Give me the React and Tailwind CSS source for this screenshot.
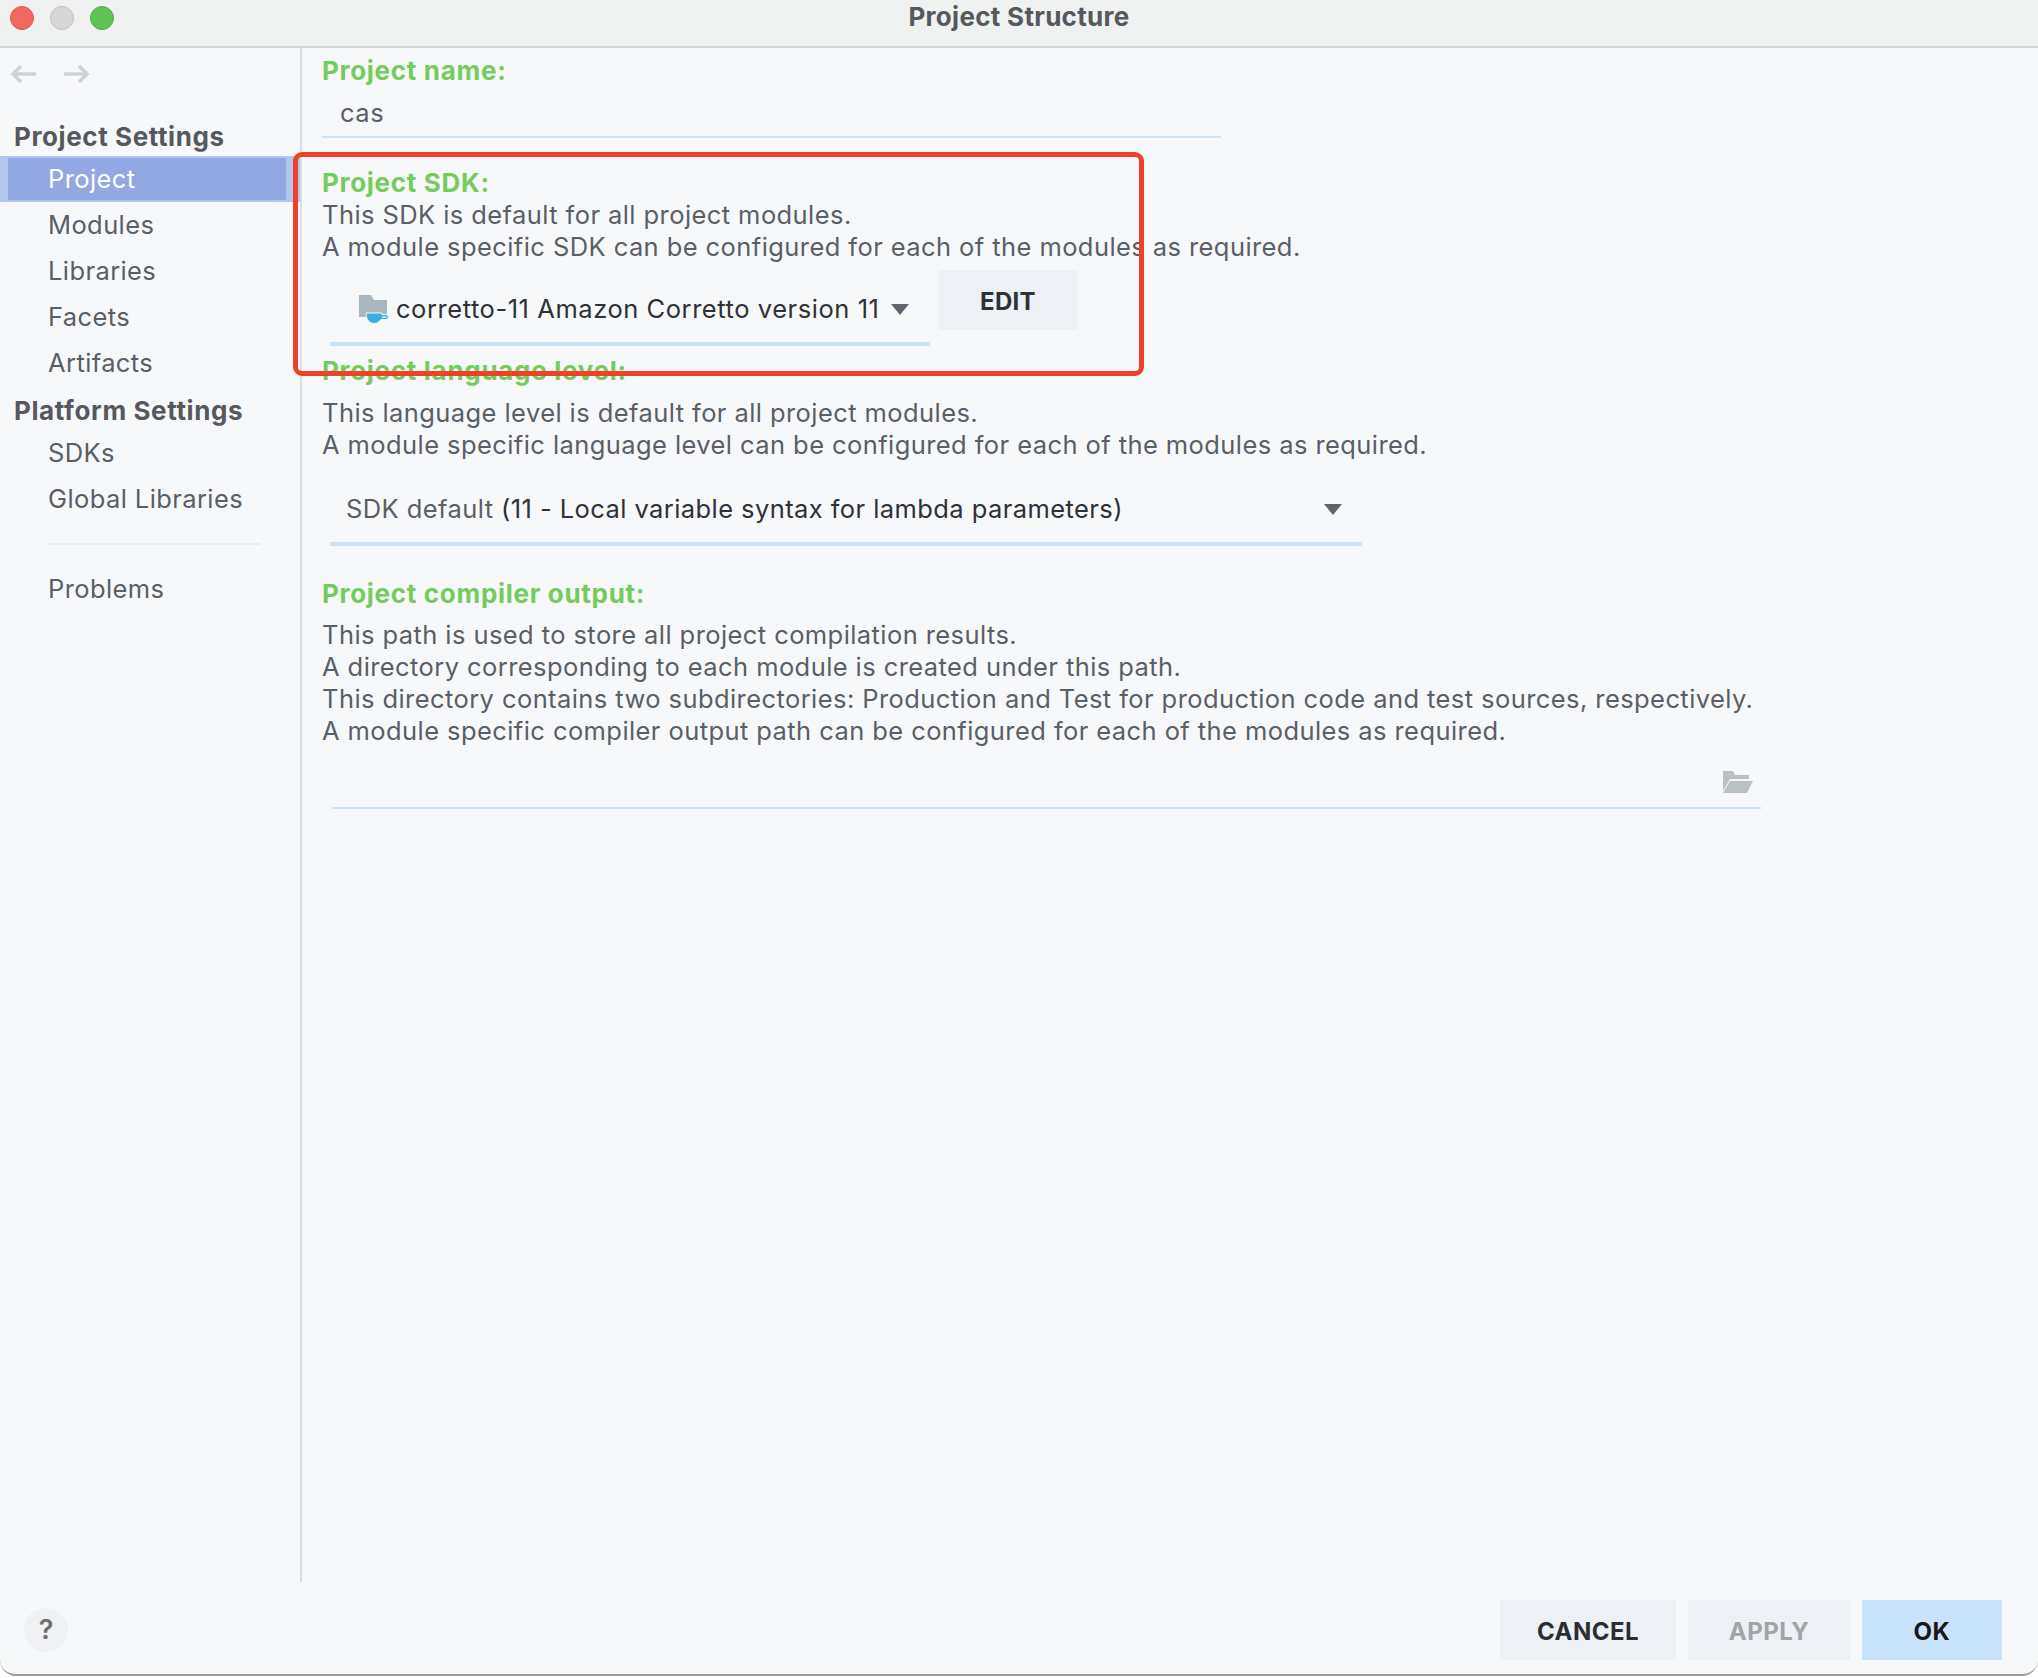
import React from "react";

const font = { fontFamily: "Inter, 'Noto Sans', sans-serif" };

function Side({ children, className = "" }) {
  return (
    <div className={`h-[46px] flex items-center text-[25.5px] tracking-[0.4px] pl-[48px] text-[#5a5f66] ${className}`}>
      {children}
    </div>
  );
}

function Heading({ children, className = "" }) {
  return <div className={`h-[32px] leading-[32px] text-[26px] tracking-[0.7px] font-bold text-[#74cc5c] ${className}`}>{children}</div>;
}

function Para({ lines }) {
  return (
    <div className="text-[25.5px] leading-[32px] text-[#5a5f66] tracking-[0.42px]">
      {lines.map((l) => (
        <div key={l} className="whitespace-nowrap">{l}</div>
      ))}
    </div>
  );
}

function Caret({ className = "" }) {
  return (
    <svg width="18" height="11" viewBox="0 0 18 11" className={className}>
      <path d="M0 0H18L9 11Z" fill="#5f656c" />
    </svg>
  );
}

export default function App() {
  return (
    <div style={font} className="w-[2038px] h-[1678px] bg-white overflow-hidden">
      <div className="relative w-full h-[1676px] bg-[#f7f8fa] rounded-b-[16px] border-b-[2px] border-[#9a9a9a] flex flex-col">
        {/* Title bar */}
        <div className="relative h-[48px] shrink-0 bg-[#f0f1f1] border-b-[2px] border-[#d4d5d6] flex items-center justify-center">
          <div className="absolute left-[10px] top-[6px] flex gap-[16px]">
            <div className="w-[24px] h-[24px] rounded-full bg-[#f0685f] border border-[#dd5a50]" />
            <div className="w-[24px] h-[24px] rounded-full bg-[#d6d7d6] border border-[#bfc0bf]" />
            <div className="w-[24px] h-[24px] rounded-full bg-[#5fc454] border border-[#52ad47]" />
          </div>
          <span className="text-[26px] font-bold tracking-[0.3px] text-[#55585c] -mt-[14px]">Project Structure</span>
        </div>

        {/* Body */}
        <div className="flex h-[1534px] shrink-0">
          <aside className="w-[302px] shrink-0 border-r-[2px] border-[#dcdde0] flex flex-col">
            <div className="h-[50px] pt-[2px] pl-[10px] flex items-center gap-[28px] shrink-0 text-[#d0d1d3]">
              <svg width="26" height="20" viewBox="0 0 26 20" fill="none" stroke="currentColor" strokeWidth="3.5">
                <path d="M26 10H3M11 2L3 10L11 18" />
              </svg>
              <svg width="26" height="20" viewBox="0 0 26 20" fill="none" stroke="currentColor" strokeWidth="3.5">
                <path d="M0 10H23M15 2L23 10L15 18" />
              </svg>
            </div>
            <div className="h-[32px] mt-[23px] leading-[32px] pl-[14px] text-[26px] tracking-[0.6px] font-bold text-[#55595f]">Project Settings</div>
            <div className="h-[46px] bg-[#b5c6ee] mt-[3px] py-[2px] pl-[8px] pr-[14px]">
              <div className="h-full bg-[#92a8e2] text-white text-[25.5px] tracking-[0.4px] flex items-center pl-[40px]">Project</div>
            </div>
            <Side>Modules</Side>
            <Side>Libraries</Side>
            <Side>Facets</Side>
            <Side>Artifacts</Side>
            <div className="h-[32px] mt-[9px] leading-[32px] pl-[14px] text-[26px] tracking-[0.6px] font-bold text-[#55595f]">Platform Settings</div>
            <Side className="mt-[3px]">SDKs</Side>
            <Side>Global Libraries</Side>
            <div className="h-[2px] bg-[#ebecee] ml-[48px] mr-[40px] mt-[21px]" />
            <Side className="mt-[21px]">Problems</Side>
          </aside>

          <main className="relative flex-1 pl-[20px]">
            <Heading className="mt-[7px]">Project name:</Heading>
            <div className="w-[899px] h-[46px] mt-[5px] border-b-[2px] border-[#cfe3f7] pl-[18px] text-[25.5px] tracking-[0.5px] leading-[42px] text-[#5a5f66]">cas</div>

            <Heading className="mt-[29px]">Project SDK:</Heading>
            <Para
              lines={[
                "This SDK is default for all project modules.",
                "A module specific SDK can be configured for each of the modules as required.",
              ]}
            />
            <div className="flex mt-[7px] ml-[8px]">
              <div className="w-[600px] h-[76px] border-b-[4px] border-[#cae3fc] flex items-center pl-[28px] pt-[6px]">
                <svg width="32" height="30" viewBox="0 0 32 30" className="shrink-0 mr-[6px] mt-[2px]">
                  <path d="M1 0H13L16 5H29V22H1Z" fill="#aab6bd" />
                  <path d="M8 18H24V19.500H28A2.500 2.500 0 0 1 28 24.500H23C21 27 19 28.500 16 28.500C12 28.500 8 25 8 18Z" fill="#3daee2" stroke="#f7f8fa" strokeWidth="1" />
                  <path d="M24 21.500H28A.6.6 0 0 1 28 22.800H24Z" fill="#f7f8fa" />
                </svg>
                <span className="text-[25.5px] text-[#2e3135] tracking-[0.55px] whitespace-nowrap">corretto-11 Amazon Corretto version 11</span>
                <Caret className="ml-[12px]" />
              </div>
              <button className="ml-[8px] w-[140px] h-[60px] pt-[3px] bg-[#edf0f4] text-[24px] font-bold tracking-[0.3px] text-[#2e3135]">EDIT</button>
            </div>

            <Heading className="mt-[9px]">Project language level:</Heading>
            <div className="mt-[10px]">
              <Para
                lines={[
                  "This language level is default for all project modules.",
                  "A module specific language level can be configured for each of the modules as required.",
                ]}
              />
            </div>
            <div className="ml-[8px] mt-[16px] w-[1032px] h-[69px] border-b-[4px] border-[#cae3fc] flex items-center justify-between pl-[16px] pr-[20px] pb-[1px] text-[25.5px] tracking-[0.42px]">
              <span className="whitespace-nowrap">
                <span className="text-[#5a5f66]">SDK default </span>
                <span className="text-[#2e3135]">(11 - Local variable syntax for lambda parameters)</span>
              </span>
              <Caret />
            </div>

            <Heading className="mt-[32px]">Project compiler output:</Heading>
            <div className="mt-[9px]">
              <Para
                lines={[
                  "This path is used to store all project compilation results.",
                  "A directory corresponding to each module is created under this path.",
                  "This directory contains two subdirectories: Production and Test for production code and test sources, respectively.",
                  "A module specific compiler output path can be configured for each of the modules as required.",
                ]}
              />
            </div>
            <div className="ml-[10px] mt-[11px] w-[1429px] h-[51px] border-b-[2px] border-[#cae3fc] flex items-center justify-end pr-[8px] pb-[2px]">
              <svg width="30" height="22" viewBox="0 0 30 22">
                <path d="M0 0H10L12 4H26V8H7L0 20Z" fill="#b9c1c5" />
                <path d="M7 10H30L24 22H0Z" fill="#b9c1c5" />
              </svg>
            </div>

            {/* Annotation overlay */}
            <div className="absolute left-[-9px] top-[104px] w-[851px] h-[224px] border-[5px] border-[#ef4128] rounded-[9px] pointer-events-none" />
          </main>
        </div>

        {/* Footer */}
        <div className="flex-1 flex items-center justify-between pl-[24px] pr-[36px] pt-[4px]">
          <div className="w-[44px] h-[44px] rounded-full bg-[#eff1f4] flex items-center justify-center text-[27px] font-semibold text-[#6e6e6e]">?</div>
          <div className="flex">
            <button className="w-[176px] h-[60px] pt-[3px] bg-[#edf0f4] text-[24px] font-bold tracking-[0.5px] text-[#2a2d31]">CANCEL</button>
            <button className="ml-[12px] w-[162px] h-[60px] pt-[3px] bg-[#edf0f4] text-[24px] font-bold tracking-[0.5px] text-[#a0a4a8]">APPLY</button>
            <button className="ml-[12px] w-[140px] h-[60px] pt-[3px] bg-[#cae3fc] text-[24px] font-bold tracking-[0.5px] text-[#16181a]">OK</button>
          </div>
        </div>
      </div>
    </div>
  );
}
